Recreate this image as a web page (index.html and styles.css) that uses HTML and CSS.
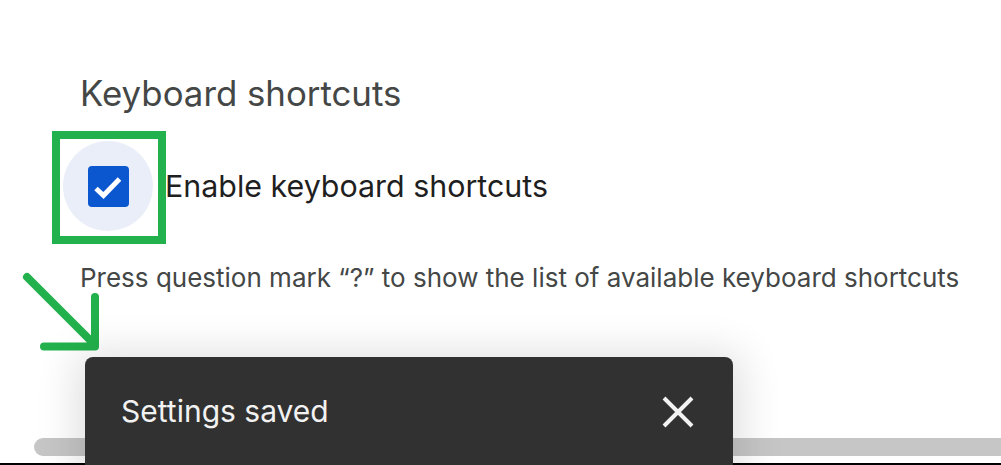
FILE: index.html
```html
<!DOCTYPE html>
<html>
<head>
<meta charset="utf-8">
<link rel="stylesheet" href="styles.css">
</head>
<body>
<div class="page">
  <section class="settings">
    <h2 class="title">Keyboard shortcuts</h2>
    <div class="option">
      <div class="check-halo">
        <div class="checkbox">
          <svg width="40" height="40" viewBox="0 0 40 40"><path d="M8 22.5 L15.5 29.5 L31.5 13" fill="none" stroke="#fff" stroke-width="5"/></svg>
        </div>
      </div>
      <span class="option-label">Enable keyboard shortcuts</span>
    </div>
    <p class="hint">Press question mark “?” to show the list of available keyboard shortcuts</p>
  </section>

  <div class="highlight"></div>
  <svg class="arrow" width="110" height="110" viewBox="0 0 110 110"><path d="M27 27 L93 93 M95 47 L95 96.5 L44 96.5" fill="none" stroke="#22b14c" stroke-width="8" stroke-linecap="round" stroke-linejoin="round"/></svg>

  <div class="scrollbar"></div>
  <div class="bottom-line"></div>

  <div class="snackbar">
    <span class="snack-text">Settings saved</span>
    <svg class="close" width="32" height="32" viewBox="0 0 32 32"><path d="M2 2 L30 30 M30 2 L2 30" stroke="#f2f2f2" stroke-width="4"/></svg>
  </div>
</div>
</body>
</html>
```

FILE: styles.css
```css
* { box-sizing: border-box; }
html, body { margin: 0; padding: 0; background: #fff; }
body { width: 1001px; height: 465px; overflow: hidden; font-family: Inter, Roboto, sans-serif; }
.page { position: relative; width: 1001px; height: 465px; }
.settings { padding: 72px 0 0 80px; }
.title { margin: 0; font-weight: 400; font-size: 34.8px; line-height: 42px; color: #444746; }
.option { display: flex; align-items: center; gap: 12px; margin: 27px 0 0 -17px; }
.check-halo { width: 90px; height: 90px; border-radius: 50%; background: #e9eef8; display: flex; align-items: center; justify-content: center; }
.checkbox { width: 41px; height: 41px; border-radius: 4px; background: #0b57d0; display: flex; align-items: center; justify-content: center; }
.option-label { font-size: 30.4px; color: #1f1f1f; }
.hint { margin: 32px 0 0; font-size: 26px; line-height: 30px; color: #444746; }
.highlight { position: absolute; left: 52px; top: 131px; width: 114px; height: 113px; border: 8px solid #22b14c; }
.arrow { position: absolute; left: 0; top: 250px; }
.scrollbar { position: absolute; left: 34px; top: 438px; right: 0; height: 18px; background: #c6c6c6; border-radius: 9px 0 0 9px; }
.bottom-line { position: absolute; left: 0; right: 0; bottom: 0; height: 2px; background: #000; }
.snackbar { position: absolute; left: 85px; top: 357px; width: 648px; height: 120px; background: #313131; border-radius: 8px 8px 0 0; box-shadow: 0 4px 40px 10px rgba(0,0,0,0.12); display: flex; align-items: flex-start; justify-content: space-between; padding: 34px 39px 0 36px; }
.snack-text { font-size: 30px; color: #f2f2f2; line-height: 40px; }
.close { margin-top: 5px; }
```
